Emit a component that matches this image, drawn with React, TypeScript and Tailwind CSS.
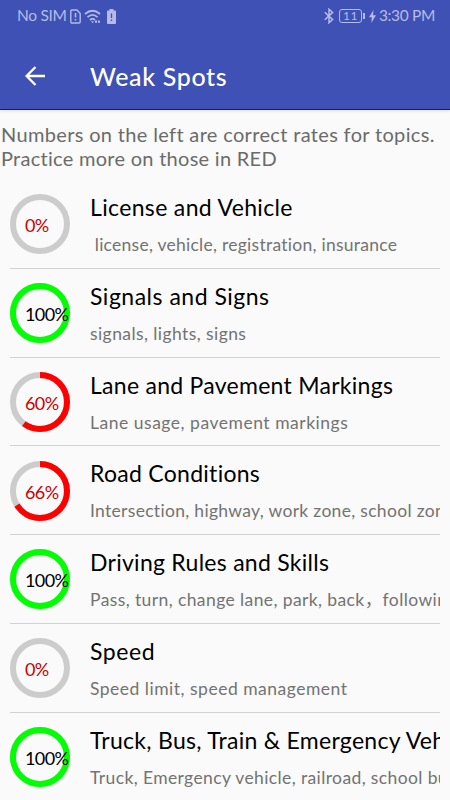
interface Topic {
  title: string;
  titleClass: string;
  keywords: string;
  keywordsClass: string;
  rate: number;
}

const topics: Topic[] = [
  {
    title: 'License and Vehicle',
    titleClass: 'tracking-[0.35px]',
    keywords: ' license, vehicle, registration, insurance',
    keywordsClass: 'tracking-[0.26px]',
    rate: 0,
  },
  {
    title: 'Signals and Signs',
    titleClass: 'tracking-[0.5px]',
    keywords: 'signals, lights, signs',
    keywordsClass: 'tracking-[0.42px]',
    rate: 100,
  },
  {
    title: 'Lane and Pavement Markings',
    titleClass: 'tracking-[0.27px]',
    keywords: 'Lane usage, pavement markings',
    keywordsClass: 'tracking-[0.52px]',
    rate: 60,
  },
  {
    title: 'Road Conditions',
    titleClass: 'tracking-[0.28px]',
    keywords: 'Intersection, highway, work zone, school zone',
    keywordsClass: 'tracking-[0.31px]',
    rate: 66,
  },
  {
    title: 'Driving Rules and Skills',
    titleClass: 'tracking-[0.27px]',
    keywords: 'Pass, turn, change lane, park, back，following',
    keywordsClass: 'tracking-[0.4px]',
    rate: 100,
  },
  {
    title: 'Speed',
    titleClass: 'tracking-[0.6px]',
    keywords: 'Speed limit, speed management',
    keywordsClass: 'tracking-[0.5px]',
    rate: 0,
  },
  {
    title: 'Truck, Bus, Train & Emergency Vehicles',
    titleClass: 'tracking-[0.28px]',
    keywords: 'Truck, Emergency vehicle, railroad, school bus',
    keywordsClass: 'tracking-[0.38px]',
    rate: 100,
  },
];

function StatusBar() {
  return (
    <div className="flex h-8 items-center justify-between pl-[17px] pr-[15px] text-[#b3bbe6]">
      <div className="flex items-center">
        <span className="w-[53px] whitespace-nowrap text-[15.5px] leading-none tracking-[-0.3px]">No SIM</span>
        <svg width="11" height="15" viewBox="0 0 11 15" fill="none" stroke="currentColor" strokeWidth="1.4">
          <path d="M0.8 2.2Q0.800 1 2 1H7L10.200 4.500V12.800Q10.200 14 9 14H2Q0.800 14 0.800 12.800Z" />
          <path d="M5.500 4V8.600M5.500 10v1.600" strokeWidth="1.600" />
        </svg>
        <svg className="ml-[3px]" width="18" height="15" viewBox="0 0 18 15" fill="none" stroke="currentColor" strokeWidth="1.700">
          <path d="M1 5Q8.500-1.500 16 5M3.500 8.200Q8.500 3.700 13.500 8.200M6 11Q8.500 8.800 11 11" />
          <path d="M7 12.300h3L8.500 14.200Z" fill="currentColor" stroke="none" />
          <path d="M11 12.700h5" strokeWidth="2.200" strokeDasharray="2 0.900" />
        </svg>
        <svg className="ml-[5px]" width="9" height="15" viewBox="0 0 9 15">
          <path d="M2.500 0h4v1.500H8Q9 1.500 9 2.500V14Q9 15 8 15H1Q0 15 0 14V2.500Q0 1.500 1 1.500h1.500Z" fill="currentColor" />
          <path d="M4.500 4.500v4.500M4.500 10.500v1.500" stroke="#3f51b5" strokeWidth="1.300" />
        </svg>
      </div>
      <div className="flex items-center">
        <svg width="10" height="16" viewBox="0 0 10 16" fill="none" stroke="currentColor" strokeWidth="1.500">
          <path d="M0.800 4.200L8.600 11.600L5 14.800V1.200L8.600 4.400L0.800 11.800" />
        </svg>
        <div className="ml-[5px] flex h-[14px] w-[23px] items-center justify-center rounded-[3px] border-[1.5px] border-current text-[12px] leading-none tracking-[0.5px]">
          11
        </div>
        <div className="ml-px h-[6px] w-[2px] bg-current" />
        <svg className="ml-[4px]" width="7" height="13" viewBox="0 0 7 13" fill="currentColor">
          <path d="M4.500 0L0 7.200H2.800L2.300 13L7 5.300H4Z" />
        </svg>
        <span className="ml-[3px] whitespace-nowrap text-[15.5px] leading-none tracking-[-0.35px]">3:30 PM</span>
      </div>
    </div>
  );
}

function RateRing({ rate }: { rate: number }) {
  const length = 2 * Math.PI * 27;
  const good = rate === 100;

  return (
    <div className="relative mt-[14.25px] size-[60px] shrink-0">
      <svg width="60" height="60" viewBox="0 0 60 60" fill="none" strokeWidth="6">
        <circle cx="30" cy="30" r="27" stroke="#cccccc" />
        {rate > 0 && (
          <circle
            cx="30"
            cy="30"
            r="27"
            stroke={good ? '#00ff00' : '#ff0000'}
            strokeDasharray={`${(length * rate) / 100} ${length}`}
            transform="rotate(-90 30 30)"
          />
        )}
      </svg>
      <span
        className={`absolute left-[15px] top-[21px] text-[18px] leading-5 tracking-[-0.6px] ${
          good ? 'text-black' : 'text-[#cc0000]'
        }`}
      >
        {rate}%
      </span>
    </div>
  );
}

function TopicRow({ topic }: { topic: Topic }) {
  return (
    <li className="flex h-[88.75px] shrink-0 border-b border-[#d2d2d2]">
      <RateRing rate={topic.rate} />
      <div className="ml-5 min-w-0 flex-1 overflow-hidden whitespace-pre">
        <h2 className={`mt-[13px] text-[23px] leading-7 text-black ${topic.titleClass}`}>{topic.title}</h2>
        <p className={`mt-[12px] text-[17.5px] leading-6 text-[#737373] ${topic.keywordsClass}`}>{topic.keywords}</p>
      </div>
    </li>
  );
}

export default function App() {
  return (
    <div className="flex h-[800px] w-[450px] flex-col overflow-hidden bg-[#fafafa] font-['Lato','Noto_Sans_CJK_SC',sans-serif]">
      <header className="h-[110px] shrink-0 border-b border-[#10178c] bg-[#3f51b5] shadow-[0_1px_3px_rgba(0,0,0,0.12)]">
        <StatusBar />
        <div className="flex h-[87px] items-center pl-[25px] text-white">
          <svg width="21" height="20" viewBox="0 0 21 20" fill="none" stroke="currentColor" strokeWidth="2.3">
            <path d="M20 10H2M10.500 1L1.600 10L10.500 19" />
          </svg>
          <h1 className="ml-[44px] pt-px text-[25px] font-medium leading-8 tracking-[0.65px]">Weak Spots</h1>
        </div>
      </header>
      <p className="h-[70px] shrink-0 whitespace-nowrap pl-px pt-[12px] text-[20px] leading-6 tracking-[0.34px] text-[#6b6b6b]">
        Numbers on the left are correct rates for topics.
        <br />
        <span className="tracking-[0.28px]">Practice more on those in RED</span>
      </p>
      <ul className="flex flex-col px-[10px]">
        {topics.map((topic) => (
          <TopicRow key={topic.title} topic={topic} />
        ))}
      </ul>
    </div>
  );
}
